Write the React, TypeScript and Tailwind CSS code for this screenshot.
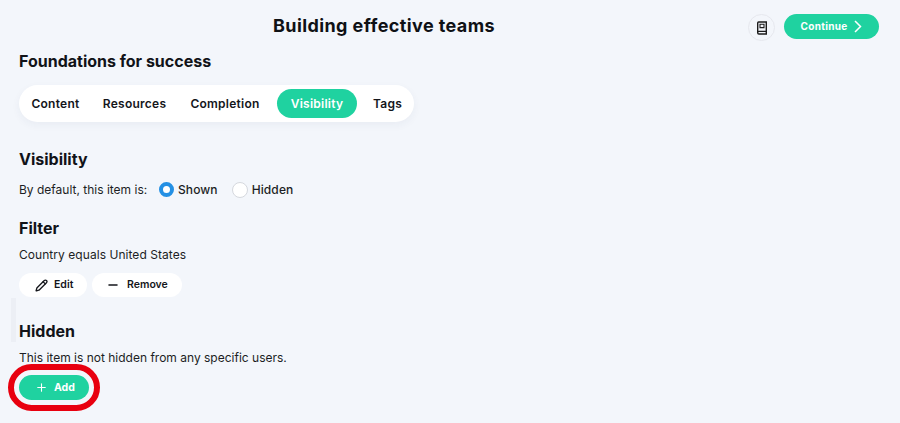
import { Minus, Pencil, Plus } from "lucide-react";

const tabs = [
  { label: "Content", box: "w-[49px]" },
  { label: "Resources", box: "ml-[23px] w-[63px]" },
  { label: "Completion", box: "ml-[24px] w-[70px]" },
  { label: "Visibility", box: "ml-[17px] w-[80px]", active: true },
  { label: "Tags", box: "ml-[16px] w-[29px]" },
];

function BookIcon() {
  return (
    <svg width="14" height="14" viewBox="0 0 14 14" fill="none" stroke="#1c1c1c" strokeWidth="1.4">
      <path d="M2.7 11.4V1.9C2.7 1.4 3.1 1 3.6 1H11.3V13H3.9C3.2 13 2.7 12.4 2.7 11.7C2.7 11 3.2 10.4 3.9 10.4H11.3" />
      <path d="M5 3.2H9V6.6H5Z" strokeWidth="1.1" />
    </svg>
  );
}

function Heading({ children }: { children: string }) {
  return <h2 className="text-[16px] leading-[20px] font-bold text-[#111318]">{children}</h2>;
}

function Radio({ checked, label }: { checked?: boolean; label: string }) {
  return (
    <div className="flex items-center gap-[4px]">
      {checked ? (
        <span className="h-[15px] w-[15px] rounded-full border-[4px] border-[#2490e4] bg-white" />
      ) : (
        <span className="h-[16px] w-[16px] rounded-full border border-[#d5d8de] bg-white" />
      )}
      <span className="text-[12px] font-medium tracking-[0.1px] text-[#1c1e24]">{label}</span>
    </div>
  );
}

export default function App() {
  return (
    <div className="relative h-[423px] w-[900px] overflow-hidden bg-[#f3f6fb] font-['Inter',sans-serif] text-[#1c1e24]">
      <header className="flex h-[51px] items-start pt-[14px] pr-[21px]">
        <h1 className="w-[748px] shrink-0 pl-[20px] text-center text-[18px] leading-[24px] font-bold tracking-[0.4px] text-[#0f1115]">
          Building effective teams
        </h1>
        <div className="ml-auto flex items-start gap-[9px]">
          <button className="flex h-[27px] w-[27px] items-center justify-center rounded-full border border-[#e6e8ee]">
            <BookIcon />
          </button>
          <button className="flex h-[25px] w-[95px] items-center justify-center gap-[7px] rounded-full bg-[#1fd2a0] text-[10px] font-bold tracking-[0.3px] text-white">
            Continue
            <svg width="8" height="13" viewBox="0 0 8 13" fill="none" stroke="white" strokeWidth="1.5">
              <path d="M1 1L6.5 6.5L1 12" />
            </svg>
          </button>
        </div>
      </header>

      <main className="px-[19px]">
        <Heading>Foundations for success</Heading>

        <nav className="mt-[14px] flex h-[37px] w-[395px] items-center rounded-full bg-white pl-[12px] shadow-[0_3px_8px_rgba(30,50,90,0.05)]">
          {tabs.map((t) => (
            <span
              key={t.label}
              className={
                t.active
                  ? `flex h-[29px] shrink-0 items-center justify-center rounded-full bg-[#1fd2a0] text-[12px] font-semibold tracking-[0.25px] whitespace-nowrap text-white ${t.box}`
                  : `flex h-[29px] shrink-0 items-center justify-center text-[12px] font-semibold tracking-[0.25px] whitespace-nowrap text-[#14161b] ${t.box}`
              }
            >
              {t.label}
            </span>
          ))}
        </nav>

        <section className="mt-[27px]">
          <Heading>Visibility</Heading>
          <div className="mt-[11px] flex h-[19px] items-center">
            <span className="w-[140px] text-[12px]">By default, this item is:</span>
            <Radio checked label="Shown" />
            <div className="ml-[14px]">
              <Radio label="Hidden" />
            </div>
          </div>
        </section>

        <section className="mt-[19px]">
          <Heading>Filter</Heading>
          <p className="mt-[8px] text-[12px] leading-[18px] tracking-[0.05px]">Country equals United States</p>
          <div className="mt-[9px] flex gap-[5px]">
            <button className="flex h-[24px] w-[68px] items-center gap-[6px] rounded-full bg-white pl-[16px] text-[10.5px] font-semibold text-[#14161b]">
              <Pencil size={13} strokeWidth={2.4} />
              Edit
            </button>
            <button className="flex h-[24px] w-[90px] items-center gap-[7px] rounded-full bg-white pl-[14px] text-[10.5px] font-semibold text-[#14161b]">
              <Minus size={14} strokeWidth={2.2} />
              Remove
            </button>
          </div>
        </section>

        <section className="mt-[24px]">
          <Heading>Hidden</Heading>
          <p className="mt-[8px] text-[12px] leading-[18px]">This item is not hidden from any specific users.</p>
          <div className="relative mt-[8px] h-[25px] w-[70px]">
            <button className="flex h-[25px] w-[70px] items-center gap-[6px] rounded-full bg-[#1fd2a0] pl-[16px] text-[10.5px] font-bold text-white">
              <Plus size={13} strokeWidth={2} />
              Add
            </button>
            <span className="absolute top-[-11px] left-[-11px] h-[47px] w-[92px] rounded-full border-[6px] border-[#e8000f]" />
          </div>
        </section>
      </main>
      <div className="absolute top-[298px] left-[11px] h-[44px] w-[5px] bg-[#eceff5]" />
    </div>
  );
}
